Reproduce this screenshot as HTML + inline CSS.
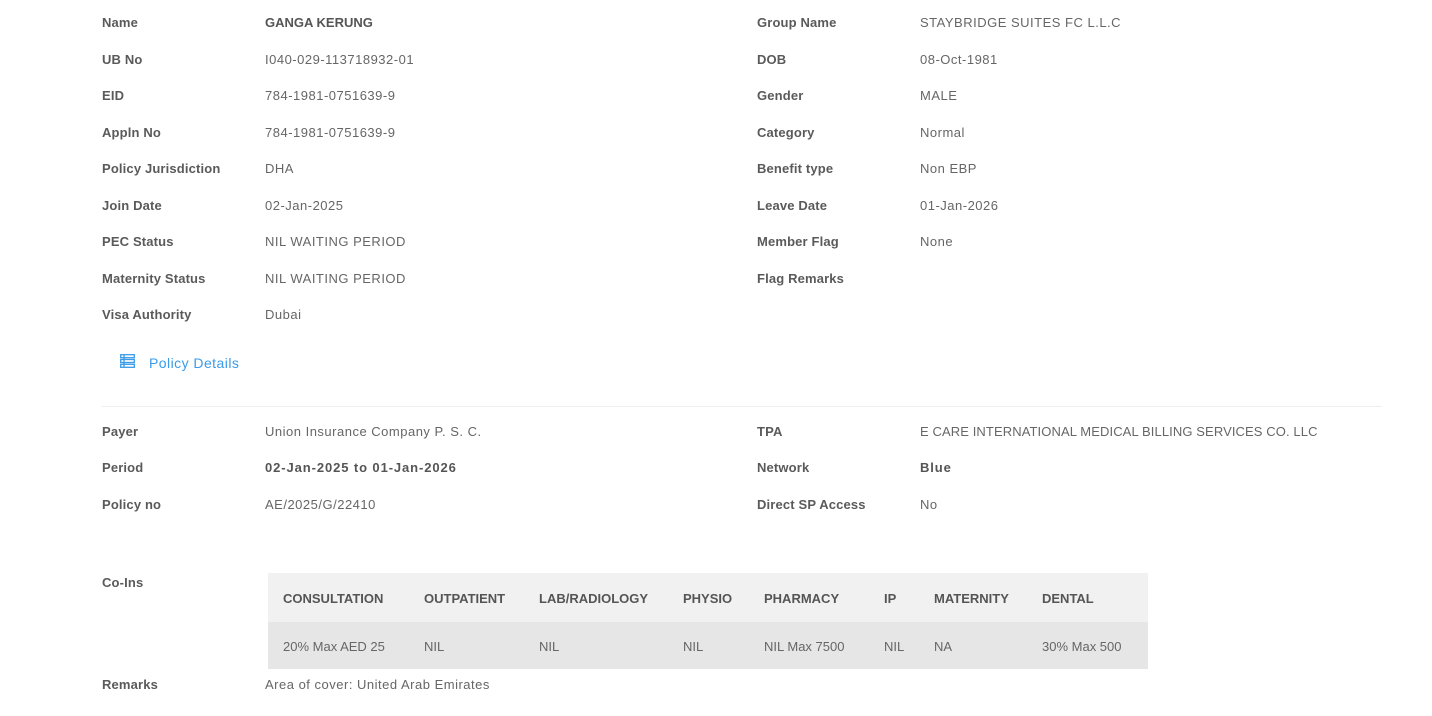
<!DOCTYPE html>
<html><head><style>
body{margin:0;width:1432px;height:716px;background:#fff;font-family:"Liberation Sans",sans-serif;font-size:13px;color:#666;position:relative;overflow:hidden}
.t{position:absolute;white-space:nowrap;line-height:16px;margin-top:1px}
.v{letter-spacing:0.5px}
.l{font-weight:bold;color:#5a5a5a;letter-spacing:0.15px}
.b{font-weight:bold;color:#555}
.bv{letter-spacing:0.9px}
.hr{position:absolute;left:102px;top:406px;width:1280px;height:1px;background:#eee}
.tb{position:absolute;left:268px;top:573px;width:880px;height:96px}
.th{position:absolute;left:0;top:0;width:880px;height:49px;background:#f1f1f1}
.tr{position:absolute;left:0;top:49px;width:880px;height:47px;background:#e6e6e6}
.tb .t{font-size:13px;letter-spacing:0}
</style></head><body>
<div class="t l" style="left:102px;top:14px">Name</div><div class="t b" style="left:265px;top:14px">GANGA KERUNG</div>
<div class="t l" style="left:102px;top:51px">UB No</div><div class="t v" style="left:265px;top:51px">I040-029-113718932-01</div>
<div class="t l" style="left:102px;top:87px">EID</div><div class="t v" style="left:265px;top:87px">784-1981-0751639-9</div>
<div class="t l" style="left:102px;top:124px">Appln No</div><div class="t v" style="left:265px;top:124px">784-1981-0751639-9</div>
<div class="t l" style="left:102px;top:160px">Policy Jurisdiction</div><div class="t v" style="left:265px;top:160px">DHA</div>
<div class="t l" style="left:102px;top:197px">Join Date</div><div class="t v" style="left:265px;top:197px">02-Jan-2025</div>
<div class="t l" style="left:102px;top:233px">PEC Status</div><div class="t v" style="left:265px;top:233px">NIL WAITING PERIOD</div>
<div class="t l" style="left:102px;top:270px">Maternity Status</div><div class="t v" style="left:265px;top:270px">NIL WAITING PERIOD</div>
<div class="t l" style="left:102px;top:306px">Visa Authority</div><div class="t v" style="left:265px;top:306px">Dubai</div>

<div class="t l" style="left:757px;top:14px">Group Name</div><div class="t v" style="left:920px;top:14px">STAYBRIDGE SUITES FC L.L.C</div>
<div class="t l" style="left:757px;top:51px">DOB</div><div class="t v" style="left:920px;top:51px">08-Oct-1981</div>
<div class="t l" style="left:757px;top:87px">Gender</div><div class="t v" style="left:920px;top:87px">MALE</div>
<div class="t l" style="left:757px;top:124px">Category</div><div class="t v" style="left:920px;top:124px">Normal</div>
<div class="t l" style="left:757px;top:160px">Benefit type</div><div class="t v" style="left:920px;top:160px">Non EBP</div>
<div class="t l" style="left:757px;top:197px">Leave Date</div><div class="t v" style="left:920px;top:197px">01-Jan-2026</div>
<div class="t l" style="left:757px;top:233px">Member Flag</div><div class="t v" style="left:920px;top:233px">None</div>
<div class="t l" style="left:757px;top:270px">Flag Remarks</div>

<svg style="position:absolute;left:120px;top:354px" width="15" height="14" viewBox="0 0 15 14" fill="none" stroke="#3a9be8" stroke-width="1.3"><rect x="0.7" y="0.7" width="13.6" height="3"/><rect x="0.7" y="5.5" width="13.6" height="3"/><rect x="0.7" y="10.3" width="13.6" height="3"/><line x1="4" y1="0.7" x2="4" y2="13.3"/></svg>
<div class="t" style="left:149px;top:354px;font-size:14px;letter-spacing:0.45px;color:#3a9be8">Policy Details</div>
<div class="hr"></div>

<div class="t l" style="left:102px;top:423px">Payer</div><div class="t v" style="left:265px;top:423px">Union Insurance Company P. S. C.</div>
<div class="t l" style="left:102px;top:459px">Period</div><div class="t b bv" style="left:265px;top:459px">02-Jan-2025 to 01-Jan-2026</div>
<div class="t l" style="left:102px;top:496px">Policy no</div><div class="t v" style="left:265px;top:496px">AE/2025/G/22410</div>
<div class="t l" style="left:757px;top:423px">TPA</div><div class="t" style="left:920px;top:423px;letter-spacing:0.1px">E CARE INTERNATIONAL MEDICAL BILLING SERVICES CO. LLC</div>
<div class="t l" style="left:757px;top:459px">Network</div><div class="t b bv" style="left:920px;top:459px">Blue</div>
<div class="t l" style="left:757px;top:496px">Direct SP Access</div><div class="t v" style="left:920px;top:496px">No</div>

<div class="t l" style="left:102px;top:574px">Co-Ins</div>
<div class="tb"><div class="th"></div><div class="tr"></div>
<div class="t b" style="left:15px;top:17px">CONSULTATION</div>
<div class="t b" style="left:156px;top:17px">OUTPATIENT</div>
<div class="t b" style="left:271px;top:17px">LAB/RADIOLOGY</div>
<div class="t b" style="left:415px;top:17px">PHYSIO</div>
<div class="t b" style="left:496px;top:17px">PHARMACY</div>
<div class="t b" style="left:616px;top:17px">IP</div>
<div class="t b" style="left:666px;top:17px">MATERNITY</div>
<div class="t b" style="left:774px;top:17px">DENTAL</div>
<div class="t" style="left:15px;top:65px">20% Max AED 25</div>
<div class="t" style="left:156px;top:65px">NIL</div>
<div class="t" style="left:271px;top:65px">NIL</div>
<div class="t" style="left:415px;top:65px">NIL</div>
<div class="t" style="left:496px;top:65px">NIL Max 7500</div>
<div class="t" style="left:616px;top:65px">NIL</div>
<div class="t" style="left:666px;top:65px">NA</div>
<div class="t" style="left:774px;top:65px">30% Max 500</div>
</div>
<div class="t l" style="left:102px;top:676px">Remarks</div><div class="t v" style="left:265px;top:676px">Area of cover: United Arab Emirates</div>
</body></html>
